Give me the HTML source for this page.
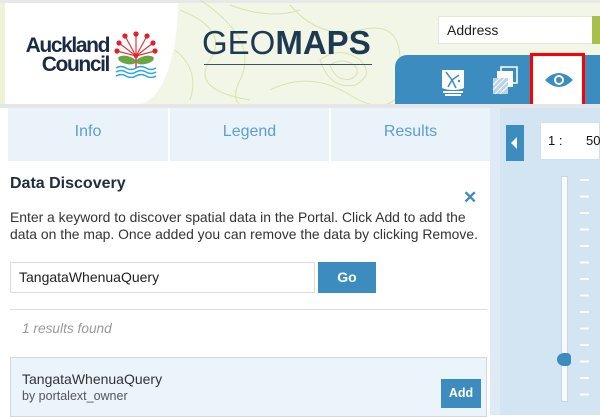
<!DOCTYPE html>
<html><head><meta charset="utf-8"><style>
*{margin:0;padding:0;box-sizing:border-box}
body{width:600px;height:415px;overflow:hidden;background:#fff;font-family:"Liberation Sans",Arial,sans-serif;position:relative}
.abs{position:absolute}
</style></head><body>
<div class="abs" style="left:0;top:0;width:600px;height:106px;background:#f2f6e6"></div>
<div class="abs" style="left:0;top:0;width:600px;height:3px;background:#e8e8e8"></div>
<svg class="abs" style="left:170px;top:0" width="240" height="106">
<g fill="none" stroke="#d6e2a8" stroke-width="1" opacity=".9">
<path d="M10 10 Q60 30 40 60 T80 100"/><path d="M30 0 Q90 40 70 80 T120 106"/>
<path d="M120 5 Q150 40 190 30 T230 60"/><path d="M100 90 Q140 70 180 95 T235 85"/>
<path d="M60 5 Q100 20 130 10"/><path d="M150 60 q20 -15 40 0 q15 15 -5 25 q-25 5 -35 -25z"/>
<path d="M160 65 q12 -8 24 0 q8 8 -3 14 q-15 3 -21 -14z"/><path d="M5 50 Q30 70 20 100"/>
</g></svg>
<div class="abs" style="left:0;top:3px;width:178px;height:101px;background:#fff;border-radius:0 0 40px 0/0 0 100px 0"></div>
<div class="abs" style="left:0;top:3px;width:5px;height:101px;background:#eef3d8"></div>
<div class="abs" style="left:10px;top:36px;font-weight:bold;font-size:21px;line-height:19px;color:#1a2b47;letter-spacing:-1.4px;text-align:right;width:99px">Auckland<br>Council</div>
<svg class="abs" style="left:114px;top:30px" width="44" height="48">
<g stroke="#e7343f" stroke-width="1.2"><path d="M22 26 L22 4 M22 26 L11 6 M22 26 L33 6 M22 26 L5 13 M22 26 L39 13 M22 26 L3 21 M22 26 L41 21"/></g>
<g fill="#e21e2b"><circle cx="22" cy="4" r="2.6"/><circle cx="11" cy="6" r="2.6"/><circle cx="33" cy="6" r="2.6"/><circle cx="5" cy="13" r="2.6"/><circle cx="39" cy="13" r="2.6"/><circle cx="3" cy="21" r="2.6"/><circle cx="41" cy="21" r="2.6"/><circle cx="22" cy="26" r="2.2"/></g>
<path d="M22 26 V38" stroke="#e7343f" stroke-width="1.5"/>
<ellipse cx="13" cy="30" rx="9" ry="4" fill="#6aa544" transform="rotate(12 13 30)"/>
<ellipse cx="31" cy="30" rx="9" ry="4" fill="#6aa544" transform="rotate(-12 31 30)"/>
<g fill="none" stroke="#2ea3dc" stroke-width="1.4"><path d="M2 38 q5 -3 10 0 t10 0 t10 0 t10 0"/><path d="M2 42 q5 -3 10 0 t10 0 t10 0 t10 0"/><path d="M2 46 q5 -3 10 0 t10 0 t10 0 t10 0"/></g>
</svg>
<div class="abs" style="left:202px;top:25px;font-size:33px;color:#1e3a52;line-height:36px;white-space:nowrap">GEO<b>MAPS</b></div>
<div class="abs" style="left:204px;top:64px;width:168px;height:1px;background:#3a5068"></div>
<div class="abs" style="left:395px;top:55px;width:205px;height:51px;background:#3d8cbf;border-radius:12px 0 0 0"></div>
<div class="abs" style="left:438px;top:16px;width:162px;height:28px;background:#fff;border:1px solid #e4e8d8"></div>
<div class="abs" style="left:447px;top:22px;font-size:14px;color:#222">Address</div>
<div class="abs" style="left:592px;top:16px;width:8px;height:28px;background:#a7c04c"></div>
<svg class="abs" style="left:440px;top:68px" width="28" height="30">
<path d="M2 2 H24 V20 Q20 22 13 22 Q6 22 2 20Z" fill="#fff"/>
<path d="M6 4 L12 12 L8 19 M12 12 L19 7 M12 12 L16 20" stroke="#3d8cbf" stroke-width="1.5" fill="none"/>
<circle cx="19" cy="13" r="1.2" fill="#3d8cbf"/>
<rect x="3" y="23" width="20" height="2" fill="#fff"/><rect x="5" y="26" width="16" height="2" fill="#fff"/>
</svg>
<svg class="abs" style="left:491px;top:65px" width="30" height="32">
<rect x="10" y="2" width="16" height="16" fill="none" stroke="#fff" stroke-width="1.5"/>
<rect x="6" y="6" width="16" height="16" fill="#fff"/>
<rect x="2" y="13" width="15" height="16" fill="#b9d4e8"/>
<path d="M2 20 L9 13 M2 25 L14 13 M4 29 L17 16 M9 29 L17 21" stroke="#fff" stroke-width="1"/>
</svg>
<div class="abs" style="left:530px;top:53px;width:55px;height:54px;background:#fff;border:3px solid #f00"></div>
<svg class="abs" style="left:544px;top:70px" width="30" height="20">
<path d="M1 10 Q15 -4 29 10 Q15 24 1 10Z" fill="#3d8cbf"/>
<circle cx="15" cy="10" r="5" fill="#fff"/><circle cx="15" cy="10" r="3" fill="#3d8cbf"/>
</svg>
<div class="abs" style="left:0;top:104px;width:600px;height:4px;background:#e4e6e8"></div>
<div class="abs" style="left:490px;top:108px;width:110px;height:307px;background:#d3e4f2"></div>
<div class="abs" style="left:490px;top:108px;width:10px;height:307px;background:#dfeaf6"></div>
<div class="abs" style="left:8px;top:108px;width:482px;height:53px;background:#ebf3fa"></div>
<div class="abs" style="left:168px;top:108px;width:2px;height:53px;background:#fff"></div>
<div class="abs" style="left:329px;top:108px;width:2px;height:53px;background:#fff"></div>
<div class="abs" style="left:8px;top:123px;width:160px;text-align:center;font-size:16px;color:#5b9fd0">Info</div>
<div class="abs" style="left:170px;top:123px;width:159px;text-align:center;font-size:16px;color:#5b9fd0">Legend</div>
<div class="abs" style="left:331px;top:123px;width:159px;text-align:center;font-size:16px;color:#5b9fd0">Results</div>
<div class="abs" style="left:10px;top:175px;font-weight:bold;font-size:16px;color:#1f2d3d">Data Discovery</div>
<div class="abs" style="left:463px;top:188px;font-weight:bold;font-size:17px;color:#3d8cbf">✕</div>
<div class="abs" style="left:10px;top:209px;font-size:13.9px;line-height:17px;color:#333;width:490px;white-space:nowrap">Enter a keyword to discover spatial data in the Portal. Click Add to add the<br>data on the map. Once added you can remove the data by clicking Remove.</div>
<div class="abs" style="left:10px;top:262px;width:305px;height:31px;border:1px solid #ddd;background:#fff"></div>
<div class="abs" style="left:19px;top:269px;font-size:14px;color:#222">TangataWhenuaQuery</div>
<div class="abs" style="left:318px;top:262px;width:58px;height:31px;background:#3d8cbf;color:#fff;font-weight:bold;font-size:14px;text-align:center;line-height:31px">Go</div>
<div class="abs" style="left:10px;top:309px;width:477px;height:1px;background:#ddd"></div>
<div class="abs" style="left:22px;top:321px;font-style:italic;font-size:13.7px;color:#999">1 results found</div>
<div class="abs" style="left:10px;top:357px;width:477px;height:60px;background:#ebf3fb;border:1px solid #d2d8de"></div>
<div class="abs" style="left:22px;top:371px;font-size:14px;color:#333">TangataWhenuaQuery</div>
<div class="abs" style="left:22px;top:389px;font-size:12.5px;color:#555">by portalext_owner</div>
<div class="abs" style="left:441px;top:379px;width:40px;height:29px;background:#3d8cbf;color:#fff;font-weight:bold;font-size:12.5px;text-align:center;line-height:29px">Add</div>
<div class="abs" style="left:506px;top:125px;width:18px;height:36px;background:#3d8cbf"></div>
<div class="abs" style="left:511px;top:137px;width:0;height:0;border-top:6px solid transparent;border-bottom:6px solid transparent;border-right:6px solid #fff"></div>
<div class="abs" style="left:540px;top:122px;width:60px;height:38px;background:#fff;border:1px solid #cfe0ee"></div>
<div class="abs" style="left:548px;top:133px;font-size:13px;color:#111">1 :</div>
<div class="abs" style="left:586px;top:133px;font-size:13px;color:#111">50</div>
<div class="abs" style="left:561px;top:176px;width:7px;height:226px;background:#f7faff;border:1px solid #c8d8e6"></div>
<div class="abs" style="left:557px;top:353px;width:14px;height:13px;background:#3d8cbf;border-radius:50% 30% 30% 50%"></div>
<div class="abs" style="left:580px;top:179px;width:9px;height:224px;background:repeating-linear-gradient(#d3e4f2 0 0px,#fbfdff 0 2px,#d3e4f2 2px 16.5px)"></div>
</body></html>
